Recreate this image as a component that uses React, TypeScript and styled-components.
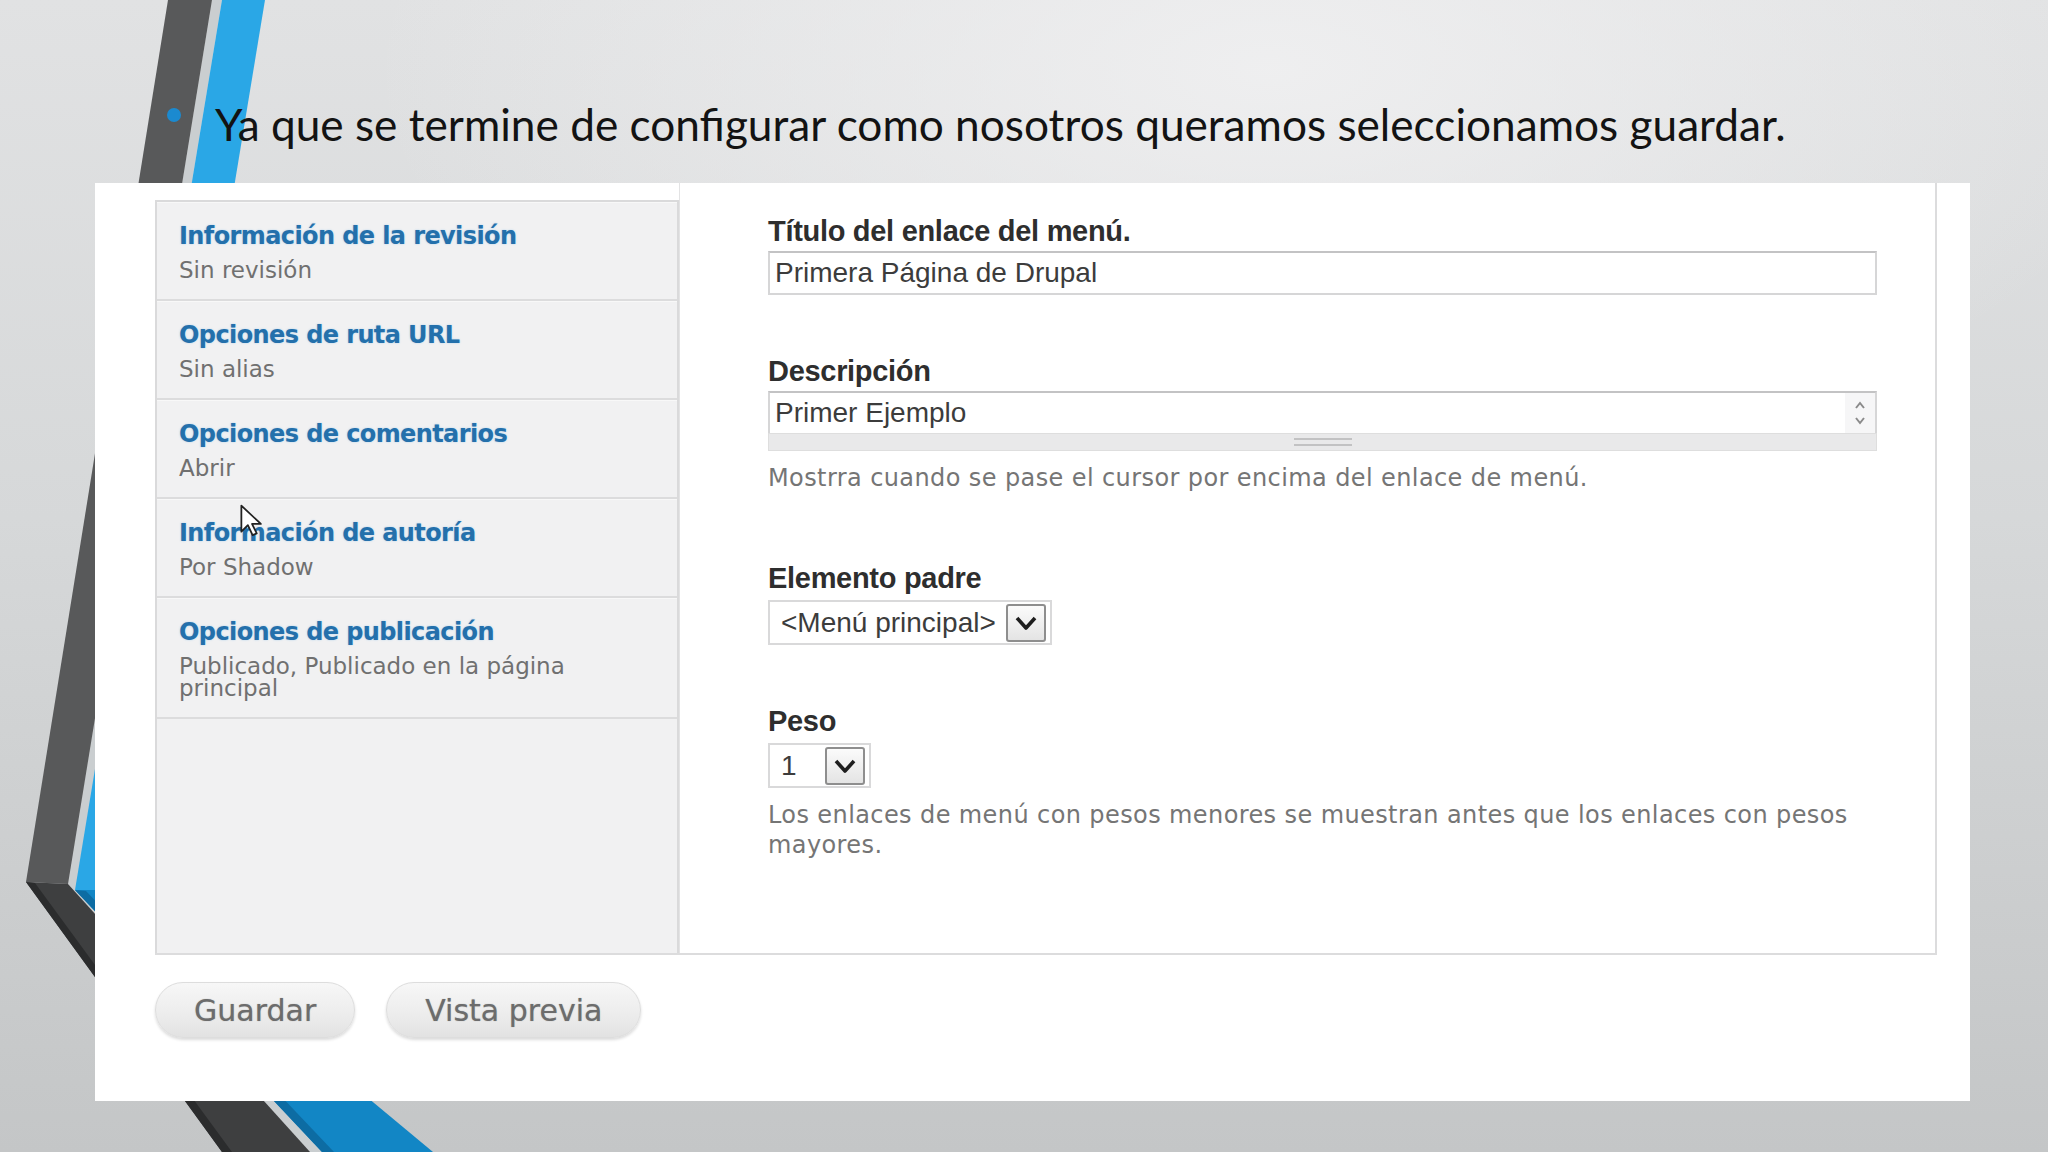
import React from "react";
import styled, { createGlobalStyle } from "styled-components";

const GlobalStyle = createGlobalStyle`
  html, body {
    margin: 0;
    padding: 0;
  }
  body {
    width: 2048px;
    height: 1152px;
    overflow: hidden;
  }
`;

const tabs = [
  { title: "Información de la revisión", summary: "Sin revisión" },
  { title: "Opciones de ruta URL", summary: "Sin alias" },
  { title: "Opciones de comentarios", summary: "Abrir" },
  { title: "Información de autoría", summary: "Por Shadow" },
  {
    title: "Opciones de publicación",
    summary: "Publicado, Publicado en la página principal",
  },
];

function Decor() {
  return (
    <S.Decor viewBox="0 0 2048 1152" preserveAspectRatio="none">
      <polygon points="212,0 222,0 75,890 322,1152 310,1152 68,884" fill="#caced0" />
      <polygon points="168,0 212,0 68,884 26,882" fill="#58595a" />
      <polygon points="26,882 68,884 310,1152 222,1152" fill="#3e3f40" />
      <polygon points="26,882 35,883 232,1152 222,1152" fill="#2b2c2d" />
      <polygon points="222,0 265,0 118,890 75,890" fill="#2aa7e6" />
      <polygon points="75,890 118,890 433,1152 322,1152" fill="#1286c5" />
      <polygon points="75,890 86,891 334,1152 322,1152" fill="#0d6ca3" />
    </S.Decor>
  );
}

function Chevron() {
  return (
    <svg width="26" height="20" viewBox="0 0 26 20">
      <path d="M4 5 L13 15 L22 5" fill="none" stroke="#1e1e1e" strokeWidth="3.6" strokeLinejoin="round" />
    </svg>
  );
}

function Spinner() {
  return (
    <S.Spinner>
      <svg width="14" height="30" viewBox="0 0 14 30">
        <path d="M3 10 L7 5 L11 10" fill="none" stroke="#8a8a8a" strokeWidth="2" />
        <path d="M3 20 L7 25 L11 20" fill="none" stroke="#8a8a8a" strokeWidth="2" />
      </svg>
    </S.Spinner>
  );
}

function Cursor() {
  return (
    <S.Cursor width="26" height="36" viewBox="0 0 22 30">
      <path
        d="M2 2 L2 24 L7.5 18.5 L11.5 27 L15 25.5 L11 17.5 L18.5 17.5 Z"
        fill="#fff"
        stroke="#222"
        strokeWidth="1.5"
        strokeLinejoin="round"
      />
    </S.Cursor>
  );
}

export default function App() {
  return (
    <>
      <GlobalStyle />
      <S.Slide>
        <Decor />
        <S.Heading>
          <S.Bullet />
          <S.HeadingText>
            Ya que se termine de configurar como nosotros queramos seleccionamos guardar.
          </S.HeadingText>
        </S.Heading>
        <S.Panel>
          <S.VerticalTabs>
            <S.TabList>
              {tabs.map((tab) => (
                <S.Tab key={tab.title}>
                  <S.TabTitle>{tab.title}</S.TabTitle>
                  <S.TabSummary>{tab.summary}</S.TabSummary>
                </S.Tab>
              ))}
            </S.TabList>
            <S.Pane>
              <S.Field>
                <S.Label>Título del enlace del menú.</S.Label>
                <S.TextInput>Primera Página de Drupal</S.TextInput>
              </S.Field>
              <S.Field>
                <S.Label>Descripción</S.Label>
                <S.TextArea>
                  <S.TextAreaBox>
                    <span>Primer Ejemplo</span>
                    <Spinner />
                  </S.TextAreaBox>
                  <S.Grip>
                    <S.GripLines />
                  </S.Grip>
                </S.TextArea>
                <S.Help>Mostrra cuando se pase el cursor por encima del enlace de menú.</S.Help>
              </S.Field>
              <S.Field>
                <S.Label>Elemento padre</S.Label>
                <S.Select $width={284}>
                  <S.SelectValue>&lt;Menú principal&gt;</S.SelectValue>
                  <S.SelectButton>
                    <Chevron />
                  </S.SelectButton>
                </S.Select>
              </S.Field>
              <S.Field>
                <S.Label>Peso</S.Label>
                <S.Select $width={103}>
                  <S.SelectValue>1</S.SelectValue>
                  <S.SelectButton>
                    <Chevron />
                  </S.SelectButton>
                </S.Select>
                <S.Help>
                  Los enlaces de menú con pesos menores se muestran antes que los enlaces con pesos mayores.
                </S.Help>
              </S.Field>
            </S.Pane>
          </S.VerticalTabs>
          <S.Actions>
            <S.Button>Guardar</S.Button>
            <S.Button>Vista previa</S.Button>
          </S.Actions>
        </S.Panel>
        <Cursor />
      </S.Slide>
    </>
  );
}

const S = {
  Slide: styled.div`
    position: relative;
    width: 2048px;
    height: 1152px;
    overflow: hidden;
    background:
      radial-gradient(ellipse 900px 420px at 62% 6%, rgba(240, 240, 241, 0.9), rgba(240, 240, 241, 0)),
      linear-gradient(180deg, #e1e2e3 0%, #d6d8d9 45%, #c4c6c7 100%);
  `,
  Decor: styled.svg`
    position: absolute;
    left: 0;
    top: 0;
    width: 2048px;
    height: 1152px;
  `,
  Heading: styled.div`
    position: relative;
    box-sizing: border-box;
    height: 183px;
    padding: 97px 0 0 167px;
    display: flex;
    align-items: flex-start;
  `,
  Bullet: styled.span`
    flex: none;
    width: 14px;
    height: 14px;
    margin-top: 11px;
    margin-right: 34px;
    border-radius: 50%;
    background: #1b8ad0;
  `,
  HeadingText: styled.div`
    font-family: Lato, "Open Sans", sans-serif;
    font-size: 44.2px;
    line-height: 54px;
    color: #131313;
    white-space: nowrap;
  `,
  Panel: styled.div`
    position: relative;
    box-sizing: border-box;
    margin-left: 95px;
    width: 1875px;
    height: 918px;
    padding: 0 33px 0 60px;
    background: #fff;
  `,
  VerticalTabs: styled.div`
    display: flex;
    height: 772px;
    border-bottom: 2px solid #dcdcdd;
    box-sizing: border-box;
  `,
  TabList: styled.div`
    flex: none;
    box-sizing: border-box;
    width: 524px;
    margin-top: 17px;
    background: #f1f1f2;
    border: 2px solid #dadadb;
    border-bottom: none;
  `,
  Tab: styled.div`
    padding: 20px 24px 18px 22px;
    border-bottom: 2px solid #dcdcdd;
    box-shadow: inset 0 1px 0 #f8f8f8;
  `,
  TabTitle: styled.div`
    font-family: "DejaVu Sans", Verdana, sans-serif;
    font-weight: bold;
    font-size: 24px;
    letter-spacing: -0.6px;
    line-height: 28px;
    color: #2470ab;
    text-shadow: 0 0 2px rgba(90, 170, 230, 0.45);
  `,
  TabSummary: styled.div`
    margin-top: 9px;
    max-width: 420px;
    font-family: "DejaVu Sans", Verdana, sans-serif;
    font-size: 23px;
    line-height: 22px;
    color: #707070;
  `,
  Pane: styled.div`
    flex: 1;
    padding: 32px 0 0 88px;
    border-right: 2px solid #dcdcdd;
    border-left: 1px solid #e3e3e4;
  `,
  Field: styled.div`
    display: flow-root;
    & + & {
      margin-top: 60px;
    }
  `,
  Label: styled.div`
    font-family: "Liberation Sans", Arial, sans-serif;
    font-weight: bold;
    font-size: 29px;
    line-height: 32px;
    letter-spacing: -0.3px;
    color: #2e2e2e;
    margin-bottom: 4px;
  `,
  TextInput: styled.div`
    box-sizing: border-box;
    width: 1109px;
    height: 44px;
    padding-left: 5px;
    display: flex;
    align-items: center;
    border: 2px solid #d6d6d7;
    border-top-color: #c3c3c4;
    font-family: "Liberation Sans", Arial, sans-serif;
    font-size: 28px;
    color: #3c3c3c;
  `,
  TextArea: styled.div`
    width: 1109px;
    margin-top: 1px;
  `,
  TextAreaBox: styled.div`
    box-sizing: border-box;
    height: 42px;
    padding-left: 5px;
    display: flex;
    align-items: center;
    justify-content: space-between;
    border: 2px solid #d6d6d7;
    border-top-color: #c3c3c4;
    border-bottom: none;
    font-family: "Liberation Sans", Arial, sans-serif;
    font-size: 28px;
    color: #3c3c3c;
  `,
  Spinner: styled.div`
    display: flex;
    align-items: center;
    justify-content: center;
    width: 30px;
    height: 100%;
    background: #f6f6f7;
  `,
  Grip: styled.div`
    box-sizing: border-box;
    height: 18px;
    display: flex;
    align-items: center;
    justify-content: center;
    background: #e9e9ea;
    border: 1px solid #dedede;
  `,
  GripLines: styled.div`
    width: 58px;
    height: 4px;
    border-top: 2px solid #c2c2c3;
    border-bottom: 2px solid #c2c2c3;
  `,
  Help: styled.div`
    max-width: 1110px;
    margin: 12px 0 9px;
    font-family: "DejaVu Sans", Verdana, sans-serif;
    font-size: 24px;
    letter-spacing: 0.4px;
    line-height: 30px;
    color: #757575;
  `,
  Select: styled.div<{ $width: number }>`
    box-sizing: border-box;
    width: ${(p) => p.$width}px;
    height: 45px;
    margin-top: 6px;
    padding: 0 4px 0 11px;
    display: flex;
    align-items: center;
    border: 2px solid #d9d9da;
    background: #fff;
  `,
  SelectValue: styled.div`
    flex: 1;
    font-family: "Liberation Sans", Arial, sans-serif;
    font-size: 28px;
    color: #3c3c3c;
    white-space: nowrap;
  `,
  SelectButton: styled.div`
    box-sizing: border-box;
    width: 40px;
    height: 38px;
    display: flex;
    align-items: center;
    justify-content: center;
    border: 2px solid #8e8e8e;
    border-radius: 3px;
    background: linear-gradient(180deg, #fbfbfb, #e4e4e4);
  `,
  Actions: styled.div`
    display: flex;
    gap: 31px;
    margin-top: 27px;
  `,
  Button: styled.div`
    box-sizing: border-box;
    height: 56px;
    padding: 0 38px;
    display: flex;
    align-items: center;
    border-radius: 28px;
    border: 1px solid #dddddd;
    background: linear-gradient(180deg, #f7f7f7 0%, #ececec 60%, #e2e2e2 100%);
    box-shadow: 0 2px 3px rgba(0, 0, 0, 0.14);
    font-family: "DejaVu Sans", Verdana, sans-serif;
    font-size: 30px;
    color: #6c6c6c;
    text-shadow: 0 0 1px rgba(80, 80, 80, 0.5);
  `,
  Cursor: styled.svg`
    position: absolute;
    left: 239px;
    top: 503px;
  `,
};
